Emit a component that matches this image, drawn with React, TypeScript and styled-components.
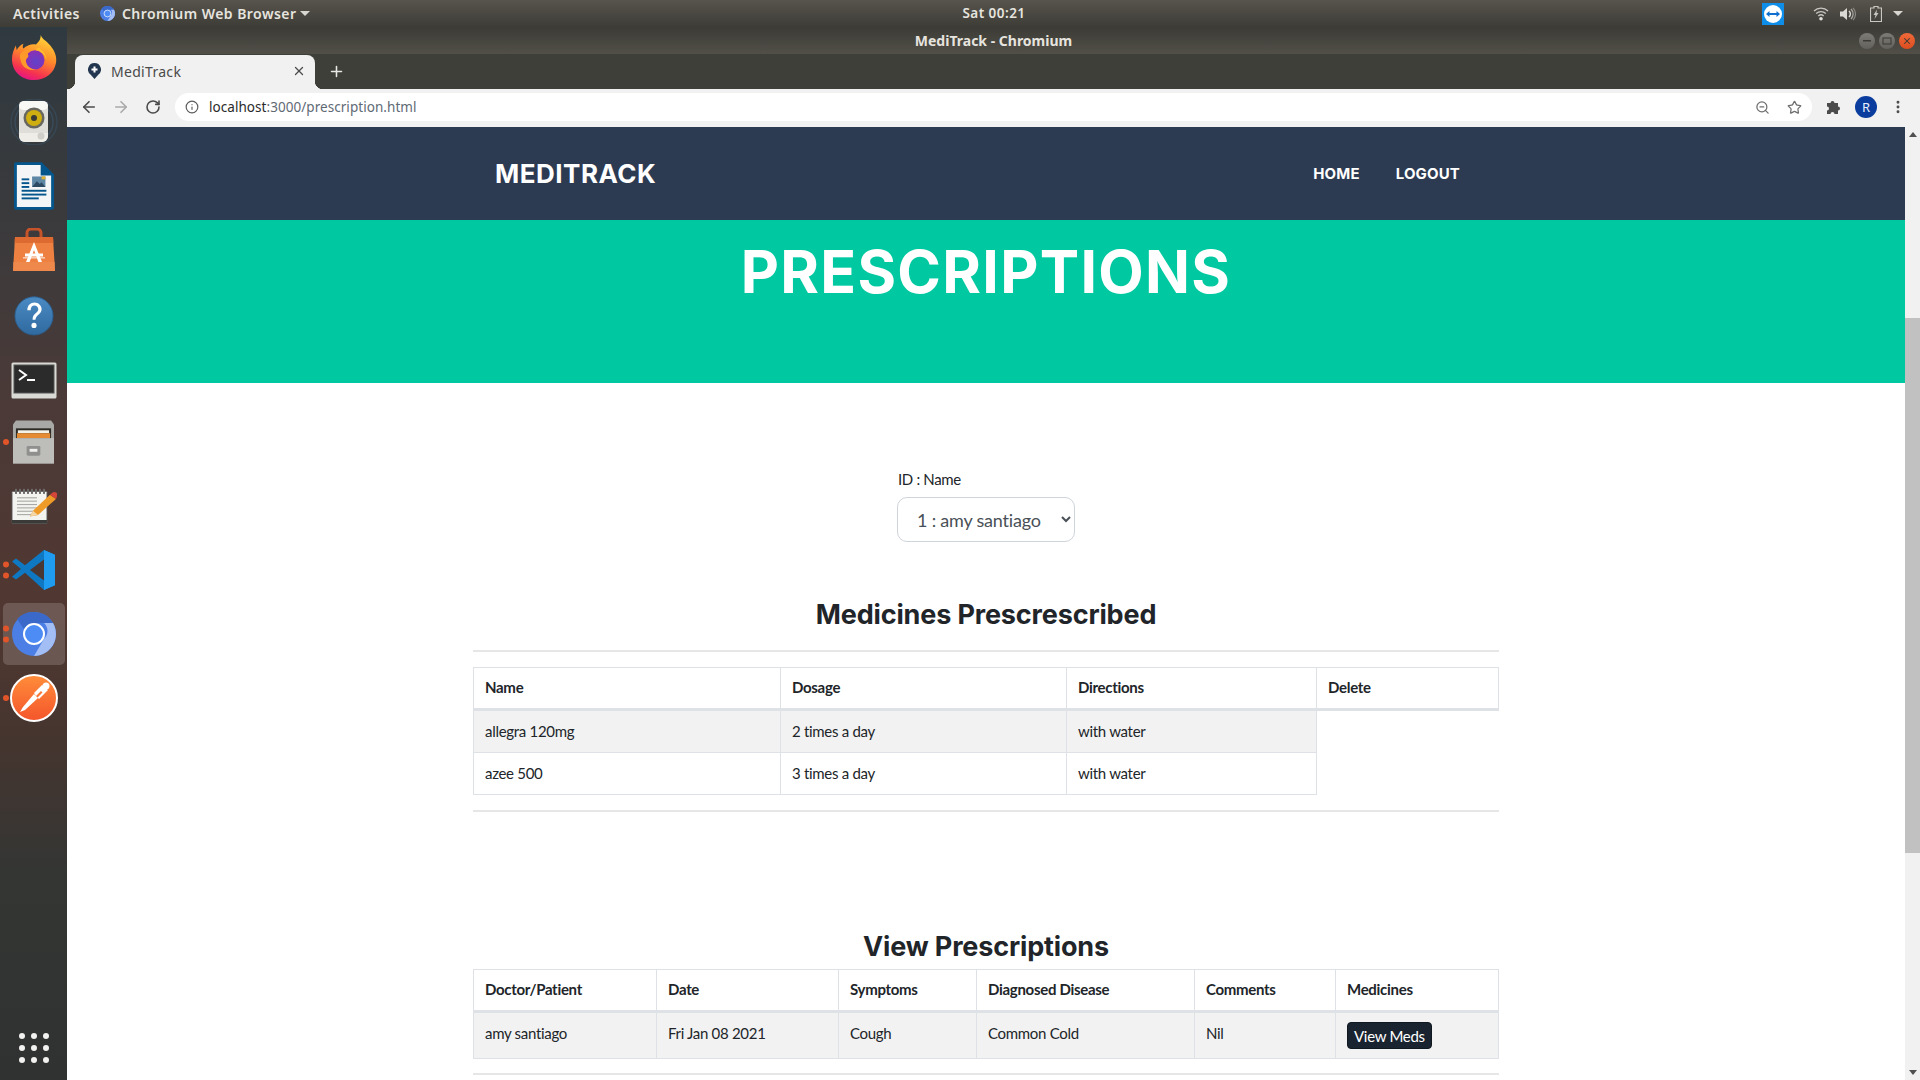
import React from "react";
import styled, { createGlobalStyle } from "styled-components";
import { ArrowLeft, ArrowRight, RotateCw, Info, ZoomOut, Star, X, Plus, MoreVertical } from "lucide-react";

const Global = createGlobalStyle`
  html, body { margin: 0; padding: 0; overflow: hidden; background: #fff; }
  * { box-sizing: border-box; }
`;

const Shell = styled.div`
  width: 1920px; height: 1080px; overflow: hidden; display: flex; flex-direction: column;
  font-family: "Lato", "Liberation Sans", sans-serif;
`;
const TopBar = styled.header`
  height: 27px; flex: none; display: grid; grid-template-columns: 962px 64px 1fr; align-items: center;
  background: linear-gradient(#57544d, #3d3c36);
  color: #e6e4df; font: 600 14px "Noto Sans", sans-serif; letter-spacing: .45px;
`;
const TopLeft = styled.div`display: flex; align-items: center; padding-left: 13px; gap: 20px;`;
const AppMenu = styled.div`display: flex; align-items: center; gap: 7px;`;
const Caret = styled.span`
  width: 0; height: 0; border-left: 5px solid transparent; border-right: 5px solid transparent; border-top: 5px solid #d8d6d0;
`;
const MenuCaret = styled(Caret)`margin-left: -4px;`;
const Clock = styled.div`text-align: center; white-space: nowrap; font-size: 13.5px; padding-bottom: 1px;`;
const Tray = styled.div`display: flex; align-items: center; justify-content: flex-end; padding-right: 14px; color: #d5d3ce;`;
const TrayItem = styled.span<{ $w: number; $gap?: number }>`
  width: ${p => p.$w}px; margin-left: ${p => p.$gap ?? 0}px; display: flex; justify-content: center; align-items: center;
`;
const Body = styled.div`flex: 1; display: flex; min-height: 0;`;
const Dock = styled.nav`
  width: 67px; flex: none; display: flex; flex-direction: column; align-items: center; overflow: hidden;
  background: linear-gradient(#2f3a40 0, #3a3a3c 18%, #4a3a38 35%, #513731 55%, #45352f 68%, #343634 80%, #2f3230 100%);
`;
const DockItem = styled.div<{ $active?: boolean }>`
  position: relative; width: 62px; height: 62px; margin: 1px 0; flex: none; display: flex; align-items: center; justify-content: center; border-radius: 5px;
  background: ${p => (p.$active ? "rgba(255,255,255,.17)" : "transparent")};
  &:first-child { margin-top: 0; }
`;
const Dots = styled.div`
  position: absolute; left: 0; top: 50%; transform: translateY(-50%); display: flex; flex-direction: column; gap: 5px;
`;
const Dot = styled.i`display: block; width: 6px; height: 6px; border-radius: 50%; background: #e2552a;`;
const DockGrid = styled.div`
  margin-top: auto; margin-bottom: 17px; display: grid; grid-template-columns: repeat(3, 6px); gap: 6px;
`;
const GridDot = styled.i`width: 6px; height: 6px; border-radius: 50%; background: #f2f2f0; display: block;`;

const Win = styled.div`flex: 1; min-width: 0; display: flex; flex-direction: column;`;
const TitleBar = styled.div`
  height: 27px; flex: none; display: grid; grid-template-columns: 1fr auto 1fr; align-items: center; color: #e6e4df;
  background: linear-gradient(#3c3b35, #514f48); font: 700 14px "Noto Sans", sans-serif;
`;
const WinTitle = styled.span`grid-column: 2;`;
const WinBtns = styled.div`grid-column: 3; display: flex; justify-content: flex-end; gap: 4px; padding-right: 5px;`;
const WinBtn = styled.span<{ $close?: boolean }>`
  width: 16px; height: 16px; border-radius: 50%; display: flex; align-items: center; justify-content: center;
  background: ${p => (p.$close ? "linear-gradient(#f0693a,#dd4d1e)" : "linear-gradient(#7c7b75,#62615b)")};
  color: #3b3a35;
`;
const TabStrip = styled.div`
  height: 35px; flex: none; display: flex; align-items: flex-end; padding-left: 8px; background: #3f3f39; gap: 10px;
`;
const Tab = styled.div`
  position: relative; width: 240px; height: 34px; background: #f1f1f1; border-radius: 8px 8px 0 0; display: flex; align-items: center;
  padding: 0 9px 2px 13px; color: #4a4a4a; font: 400 14px "Noto Sans", sans-serif; letter-spacing: .3px;
  &::before, &::after { content: ""; position: absolute; bottom: 0; width: 8px; height: 8px; }
  &::before { left: -8px; background: radial-gradient(circle at 0 0, #3f3f39 8px, #f1f1f1 8.5px); }
  &::after { right: -8px; background: radial-gradient(circle at 100% 0, #3f3f39 8px, #f1f1f1 8.5px); }
`;
const TabTitle = styled.span`flex: 1; margin-left: 10px;`;
const NewTab = styled.span`color: #e8e8e6; display: flex; align-self: center; margin-left: 3px;`;
const Toolbar = styled.div`
  height: 38px; flex: none; background: #f1f1f1; display: flex; align-items: center; padding: 0 6px 2px 0;
`;
const NavBtn = styled.span<{ $w: number; $dim?: boolean }>`
  width: ${p => p.$w}px; flex: none; display: flex; justify-content: center; color: ${p => (p.$dim ? "#a9a9a9" : "#4b4b4b")};
`;
const Lead = styled.span`width: 6px; flex: none;`;
const UrlBar = styled.div`
  flex: 1; height: 28px; background: #fff; border-radius: 14px; display: flex; align-items: center; padding: 0 2px 0 10px; margin: 0 6px 0 6px;
  font: 400 13.5px "Noto Sans", sans-serif; letter-spacing: .05px; color: #5f6a75;
`;
const UrlPath = styled.span`padding-bottom: 1px;`;
const UrlHost = styled(UrlPath)`color: #2a2a2a; margin-left: 10px;`;
const UrlSpacer = styled.span`flex: 1;`;
const UrlIcon = styled.span`width: 32px; display: flex; justify-content: center; color: #6e6e6e;`;
const Avatar = styled.span`
  width: 22px; height: 22px; border-radius: 50%; background: #0b3d9e; color: #e8eefc; font: 400 13px "Noto Sans", sans-serif;
  display: flex; align-items: center; justify-content: center;
`;
const Viewport = styled.div`flex: 1; min-height: 0; display: flex;`;
const Page = styled.main`flex: 1; min-width: 0; overflow: hidden; background: #fff; color: #212529;`;
const Scroll = styled.div`width: 15px; flex: none; background: #f1f1f1; display: flex; flex-direction: column; align-items: center;`;
const ScrollArrow = styled.span<{ $down?: boolean }>`
  flex: none; width: 0; height: 0; margin: 5px 0; border-left: 4px solid transparent; border-right: 4px solid transparent;
  ${p => (p.$down ? "border-top: 5px solid #505050;" : "border-bottom: 5px solid #505050;")}
`;
const Thumb = styled.div`width: 15px; height: 535px; background: #c1c1c1; margin: 176px 0 auto;`;

const SiteNav = styled.div`
  height: 93px; background: #2c3a52; display: flex; align-items: center; justify-content: space-between; padding: 0 445px 0 428px; color: #fff;
`;
const Brand = styled.div`font: 700 26px "Inter", sans-serif; letter-spacing: .5px;`;
const NavLinks = styled.div`display: flex; gap: 36px;`;
const NavLink = styled.a`font: 700 15px "Inter", sans-serif; letter-spacing: .15px; color: #fff;`;
const Hero = styled.section`height: 163px; background: #00c9a1; text-align: center; color: #fff;`;
const HeroTitle = styled.h1`margin: 0; padding-top: 16px; font: 700 59px/72px "Inter", sans-serif; letter-spacing: 1.3px;`;
const Content = styled.div`width: 1026px; margin: 0 auto;`;
const PatientForm = styled.div`display: flex; flex-direction: column; width: 178px; margin: 84px auto 0;`;
const Label = styled.label`font-size: 15px; line-height: 24px; margin-bottom: 6px; letter-spacing: -.35px; padding-left: 1px;`;
const Select = styled.select`
  height: 45px; border: 1px solid #ced4da; border-radius: 10px; background: #fff; color: #495057; padding: 0 0 0 15px;
  font: 400 18px "Lato", sans-serif; letter-spacing: -.2px;
`;
const SectionTitle = styled.h2<{ $top: number }>`
  margin: ${p => p.$top}px 0 0; text-align: center; font: 700 27px/34px "Inter", sans-serif; color: #212529; letter-spacing: -.15px;
`;
const Rule = styled.hr<{ $top: number; $bottom: number }>`
  border: 0; height: 2px; background: #e6e6e6; margin: ${p => p.$top}px 0 ${p => p.$bottom}px;
`;
const Table = styled.table<{ $top?: number }>`
  width: 1025px; margin-top: ${p => p.$top ?? 0}px; border-collapse: collapse; table-layout: fixed; font-size: 15px; line-height: 24px;
`;
const Cell = styled.td`border: 1px solid #dee2e6; padding: 8px 11px 9px; letter-spacing: -.3px; vertical-align: top;`;
const Head = styled.th`border: 1px solid #dee2e6; border-bottom: 3px solid #dee2e6; padding: 7px 11px 9px; text-align: left; font-weight: 700; letter-spacing: -.3px;`;
const Row = styled.tr<{ $shade?: boolean }>`background: ${p => (p.$shade ? "#f2f2f2" : "#fff")};`;
const ViewBtn = styled.button`
  background: #1a2430; color: #fff; border: 1px solid #101820; border-radius: 4px; font: 400 15px "Lato", sans-serif; height: 27px; padding: 0 6px; display: block; margin-top: 1px; letter-spacing: -.3px;
`;

const Firefox = () => (
  <svg width="46" height="46" viewBox="0 0 48 48">
    <defs>
      <linearGradient id="ff1" x1="0.7" y1="0" x2="0.3" y2="1"><stop offset="0" stopColor="#ffd83a" /><stop offset=".45" stopColor="#ff8a2a" /><stop offset=".8" stopColor="#f5334f" /><stop offset="1" stopColor="#e3128a" /></linearGradient>
      <radialGradient id="ff2" cx=".55" cy=".6" r=".6"><stop offset="0" stopColor="#5f41c9" /><stop offset="1" stopColor="#8c2fb3" /></radialGradient>
    </defs>
    <path d="M31 0c2 5 6 6 10 11 5 6 7 12 6 18-2 11-11 18-23 18C11 47 1 38 1 25c0-5 2-10 4-14l1 5c1-3 4-6 7-7-1 2-1 4 0 5 3-3 9-5 13-4 3-3 5-5 5-10z" fill="url(#ff1)" />
    <circle cx="25" cy="26" r="10" fill="url(#ff2)" />
    <path d="M10 19c3-3 8-5 13-3-5 1-6 3-5 5 1 3-4 3-2 8 1 4 5 7 10 7-8 2-15-3-16-10-1-3-1-5 0-7z" fill="#ff9a2a" />
    <path d="M28 13c5 2 9 7 9 13-2-6-5-9-11-10z" fill="#ffbd2e" />
  </svg>
);
const Speaker = () => (
  <svg width="50" height="46" viewBox="0 0 50 46">
    <circle cx="25" cy="23" r="23" fill="none" stroke="#3c5a72" strokeOpacity=".4" strokeWidth="1.500" />
    <circle cx="25" cy="23" r="19" fill="none" stroke="#3c5a72" strokeOpacity=".55" strokeWidth="1.500" />
    <rect x="10" y="2" width="29" height="41" rx="6" fill="#dfded8" />
    <rect x="10" y="2" width="29" height="9" rx="5" fill="#f8f8f5" />
    <path d="M10 34h29v3a6 6 0 0 1-6 6H16a6 6 0 0 1-6-6z" fill="#eeede8" />
    <circle cx="25" cy="19" r="10.500" fill="#67665f" />
    <circle cx="25" cy="19" r="8" fill="#cfae12" />
    <circle cx="25" cy="19" r="3" fill="#3a3a36" />
    <circle cx="32" cy="37" r="3.500" fill="#cfcec8" />
  </svg>
);
const Writer = () => (
  <svg width="40" height="48" viewBox="0 0 42 50">
    <path d="M2 0h27l13 13v34a3 3 0 0 1-3 3H3a3 3 0 0 1-3-3V2a2 2 0 0 1 2-2z" fill="#04568c" />
    <path d="M3 3h25v11h11v33H3z" fill="#f4f5f6" />
    <path d="M29 2l11 11H29z" fill="#04568c" />
    <rect x="8" y="17" width="8" height="2" fill="#04568c" /><rect x="8" y="21" width="8" height="2" fill="#04568c" /><rect x="8" y="25" width="8" height="2" fill="#04568c" />
    <rect x="19" y="15" width="14" height="11" fill="#5e86a5" />
    <path d="M19 26l5-6 3 3 2-2 4 5z" fill="#2c4a63" /><rect x="29" y="15" width="4" height="3" fill="#e0b32f" />
    <rect x="8" y="29" width="26" height="2" fill="#04568c" /><rect x="8" y="33" width="26" height="2" fill="#04568c" /><rect x="8" y="37" width="18" height="2" fill="#04568c" />
  </svg>
);
const Store = () => (
  <svg width="42" height="44" viewBox="0 0 42 44">
    <path d="M14 10V5a4 4 0 0 1 4-4h6a4 4 0 0 1 4 4v5" fill="none" stroke="#c6532a" strokeWidth="3" />
    <path d="M2 9h38l2 34H0z" fill="#ee8142" />
    <path d="M2 9h38l.3 6H1.700z" fill="#dd6a30" />
    <path d="M0 34h42v9H0z" fill="#f08d52" opacity=".6" />
    <path d="M21 14l-8 20h3.600l4.400-12 4.400 12H29z" fill="#fff" />
    <rect x="12" y="25.500" width="18" height="3" fill="#fff" /><rect x="10" y="29" width="22" height="1.600" fill="#fff" opacity=".6" />
  </svg>
);
const Help = () => (
  <svg width="40" height="44" viewBox="0 -4 42 46">
    <defs><linearGradient id="hp" x1="0" y1="0" x2="0" y2="1"><stop offset="0" stopColor="#4b8ac4" /><stop offset="1" stopColor="#2f6a9f" /></linearGradient></defs>
    <circle cx="21" cy="21" r="20" fill="url(#hp)" stroke="#2a5f8f" />
    <path d="M14 15c0-5 3.500-8 7.500-8s7.500 3 7.500 7c0 5-6 6-6.500 11h-3c0-7 6-7 6-11 0-2.500-2-4-4-4-2.500 0-4 2-4 5z" fill="#fff" />
    <circle cx="21" cy="31" r="2.700" fill="#fff" />
  </svg>
);
const Terminal = () => (
  <svg width="46" height="42" viewBox="0 0 46 42">
    <rect x=".5" y="5.500" width="45" height="36" rx="1.500" fill="#d9d9d6" />
    <rect x="3" y="8" width="40" height="28" fill="#2b2b2b" stroke="#555" />
    <path d="M8 13l7 5-7 5" fill="none" stroke="#fff" strokeWidth="2" />
    <rect x="16" y="22" width="8" height="2" fill="#fff" />
  </svg>
);
const Files = () => (
  <svg width="41" height="44" viewBox="0 0 42 44">
    <path d="M3 0h36l3 4v40H0V4z" fill="#a8a8a6" />
    <rect x="3" y="8" width="36" height="14" fill="#2d2a26" />
    <rect x="5" y="10" width="32" height="3" fill="#f4f1e6" /><rect x="4" y="13" width="34" height="5" fill="#e58c32" />
    <rect x="0" y="18" width="42" height="26" fill="#bdbdba" />
    <rect x="14" y="26" width="14" height="10" rx="1.500" fill="#8f8f8d" /><rect x="17" y="29" width="8" height="3" fill="#efefed" />
  </svg>
);
const Notes = () => (
  <svg width="46" height="37" viewBox="0 0 46 44" preserveAspectRatio="none">
    <rect x="1" y="4" width="35" height="38" rx="1" fill="#f3f3ef" stroke="#555" />
    <path d="M1 38h35v4H1z" fill="#3a3a38" />
    {[4, 8, 12, 16, 20, 24, 28, 32].map(x => <rect key={x} x={x} y="1" width="2" height="6" fill="#6a6a68" />)}
    {[11, 15, 19, 23, 27, 31].map(y => <rect key={y} x="6" y={y} width="20" height="1.300" fill="#a8a8a6" />)}
    <path d="M19 34l3-7L39 8l6 5-18 19z" fill="#ee9b28" />
    <path d="M19 34l3-7 5 5z" fill="#f4d7a6" />
    <path d="M39 8l2-2a3 3 0 0 1 5 4l-1 3z" fill="#d4453a" />
  </svg>
);
const VSCode = () => (
  <svg width="44" height="42" viewBox="0 0 44 44" preserveAspectRatio="none">
    <path d="M32 1l11 5v32l-11 5-19-18L4 32 0 29l9-8-9-8 4-3 9 7z" fill="#0e78c2" />
    <path d="M32 1l11 5v32l-11 5z" fill="#1f9cf0" />
    <path d="M32 11L18 22l14 11z" fill="#4a3733" />
  </svg>
);
const Chromium = ({ s }: { s: number }) => (
  <svg width={s} height={s} viewBox="0 0 44 44">
    <circle cx="22" cy="22" r="22" fill="#4b7fe6" />
    <path d="M22 0a22 22 0 0 1 19 11H22a11 11 0 0 0-10 6L5 7A22 22 0 0 1 22 0z" fill="#3a69c9" />
    <path d="M41 11a22 22 0 0 1-19 33l10-17a11 11 0 0 0 0-16z" fill="#a3bdf5" />
    <circle cx="22" cy="22" r="10" fill="#4d8cf5" stroke="#fff" strokeWidth="2" />
  </svg>
);
const Postman = () => (
  <svg width="48" height="48" viewBox="0 0 48 48">
    <defs><linearGradient id="pm" x1="0" y1="0" x2="0" y2="1"><stop offset="0" stopColor="#ff8d3a" /><stop offset="1" stopColor="#f4552b" /></linearGradient></defs>
    <circle cx="24" cy="24" r="23" fill="url(#pm)" stroke="#fff" strokeWidth="2" />
    <path d="M10 38l3-5 11-13 4 4-13 12z" fill="#fff" />
    <path d="M24 19l8-8 6 5-9 9-1.500-1.500 5-5-1.500-1.500-5 5z" fill="#fff" />
    <circle cx="36" cy="12" r="3.500" fill="#fff" />
  </svg>
);
const Puzzle = () => (
  <svg width="16" height="16" viewBox="0 0 16 16">
    <path d="M1 4h3.500a2 2 0 1 1 4 0H12v3.500a2 2 0 1 1 0 4V15H8.500a2 2 0 1 0-4 0H1v-3.500a2 2 0 1 0 0-4z" fill="#4b4b4b" />
  </svg>
);
const Pin = () => (
  <svg width="13" height="16" viewBox="0 0 13 16">
    <path d="M6.500 0a6.500 6.500 0 0 1 4 11.600L6.500 16l-4-4.400A6.500 6.500 0 0 1 6.500 0z" fill="#22374f" />
    <path d="M5.500 3.500h2v2h2v2h-2v2h-2v-2h-2v-2h2z" fill="#fff" />
  </svg>
);
const TeamViewer = () => (
  <svg width="22" height="22" viewBox="0 0 22 22">
    <rect width="22" height="22" fill="#0e8ee9" />
    <circle cx="11" cy="11" r="9" fill="#fff" />
    <path d="M4 11l3.500-3v2h7V8l3.500 3-3.500 3v-2h-7v2z" fill="#0e6fcf" />
  </svg>
);
const WifiIcon = () => (
  <svg width="16" height="15" viewBox="0 0 16 15">
    <g fill="none" stroke="#c9c7c2" strokeWidth="1.300">
      <path d="M1 5a10 10 0 0 1 14 0" /><path d="M3.200 7.500a7 7 0 0 1 9.600 0" /><path d="M5.300 10a4 4 0 0 1 5.400 0" />
    </g>
    <circle cx="8" cy="12.800" r="1.800" fill="#e2e0da" />
  </svg>
);
const SoundIcon = () => (
  <svg width="16" height="14" viewBox="0 0 16 14">
    <path d="M0 4.500h3L7 1v12L3 9.500H0z" fill="#dcdad5" />
    <path d="M9 4a4 4 0 0 1 0 6" fill="none" stroke="#dcdad5" strokeWidth="1.500" />
    <path d="M11 2a7 7 0 0 1 0 10" fill="none" stroke="#a9a7a2" strokeWidth="1.300" />
    <path d="M13 .8a9 9 0 0 1 0 12.400" fill="none" stroke="#8a8883" strokeWidth="1.200" />
  </svg>
);
const Battery = () => (
  <svg width="12" height="16" viewBox="0 0 12 16">
    <path d="M4 .5h4v1.500h3.500V15.500H.5V2H4z" fill="none" stroke="#c9c7c2" strokeWidth="1.200" />
    <path d="M7 3.500L3.500 9h2L4.500 13 8.500 7h-2z" fill="#c9c7c2" />
  </svg>
);

const dockItems: { el: React.ReactNode; dots?: number; active?: boolean }[] = [
  { el: <Firefox /> }, { el: <Speaker /> }, { el: <Writer /> }, { el: <Store /> }, { el: <Help /> }, { el: <Terminal /> },
  { el: <Files />, dots: 1 }, { el: <Notes /> }, { el: <VSCode />, dots: 2 }, { el: <Chromium s={44} />, dots: 2, active: true }, { el: <Postman />, dots: 1 },
];

export default function App() {
  return (
    <Shell>
      <Global />
      <TopBar>
        <TopLeft>
          <span>Activities</span>
          <AppMenu><Chromium s={15} />Chromium Web Browser<MenuCaret /></AppMenu>
        </TopLeft>
        <Clock>Sat 00:21</Clock>
        <Tray>
          <TrayItem $w={22}><TeamViewer /></TrayItem>
          <TrayItem $w={26} $gap={24}><WifiIcon /></TrayItem>
          <TrayItem $w={28}><SoundIcon /></TrayItem>
          <TrayItem $w={28}><Battery /></TrayItem>
          <TrayItem $w={16}><Caret /></TrayItem>
        </Tray>
      </TopBar>
      <Body>
        <Dock>
          {dockItems.map((d, i) => (
            <DockItem key={i} $active={d.active}>
              {d.el}
              {d.dots ? <Dots>{Array.from({ length: d.dots }).map((_, k) => <Dot key={k} />)}</Dots> : null}
            </DockItem>
          ))}
          <DockGrid>{Array.from({ length: 9 }).map((_, i) => <GridDot key={i} />)}</DockGrid>
        </Dock>
        <Win>
          <TitleBar>
            <WinTitle>MediTrack - Chromium</WinTitle>
            <WinBtns>
              <WinBtn><svg width="10" height="10"><rect x="1" y="4" width="8" height="1.500" fill="#3b3a35" /></svg></WinBtn>
              <WinBtn><svg width="10" height="10"><rect x="1" y="2" width="8" height="6" fill="none" stroke="#3b3a35" /></svg></WinBtn>
              <WinBtn $close><X size={10} strokeWidth={2.5} /></WinBtn>
            </WinBtns>
          </TitleBar>
          <TabStrip>
            <Tab><Pin /><TabTitle>MediTrack</TabTitle><X size={14} strokeWidth={2.2} /></Tab>
            <NewTab><Plus size={17} strokeWidth={2.2} /></NewTab>
          </TabStrip>
          <Toolbar>
            <Lead />
            <NavBtn $w={32}><ArrowLeft size={18} strokeWidth={2.2} /></NavBtn>
            <NavBtn $w={32} $dim><ArrowRight size={18} strokeWidth={2.2} /></NavBtn>
            <NavBtn $w={32}><RotateCw size={16} strokeWidth={2.4} /></NavBtn>
            <UrlBar>
              <Info size={14} color="#5a5a5a" />
              <UrlHost>localhost</UrlHost><UrlPath>:3000/prescription.html</UrlPath>
              <UrlSpacer />
              <UrlIcon><ZoomOut size={15} /></UrlIcon>
              <UrlIcon><Star size={15} /></UrlIcon>
            </UrlBar>
            <NavBtn $w={32}><Puzzle /></NavBtn>
            <NavBtn $w={32}><Avatar>R</Avatar></NavBtn>
            <NavBtn $w={32}><MoreVertical size={16} strokeWidth={2.4} /></NavBtn>
          </Toolbar>
          <Viewport>
            <Page>
              <SiteNav>
                <Brand>MEDITRACK</Brand>
                <NavLinks><NavLink>HOME</NavLink><NavLink>LOGOUT</NavLink></NavLinks>
              </SiteNav>
              <Hero><HeroTitle>PRESCRIPTIONS</HeroTitle></Hero>
              <Content>
                <PatientForm>
                  <Label>ID : Name</Label>
                  <Select defaultValue="1"><option value="1">1 : amy santiago</option></Select>
                </PatientForm>
                <SectionTitle $top={56}>Medicines Prescrescribed</SectionTitle>
                <Rule $top={18} $bottom={15} />
                <Table>
                  <colgroup><col width="307" /><col width="286" /><col width="250" /><col width="182" /></colgroup>
                  <thead><tr><Head>Name</Head><Head>Dosage</Head><Head>Directions</Head><Head>Delete</Head></tr></thead>
                  <tbody>
                    <Row $shade><Cell>allegra 120mg</Cell><Cell>2 times a day</Cell><Cell>with water</Cell></Row>
                    <Row><Cell>azee 500</Cell><Cell>3 times a day</Cell><Cell>with water</Cell></Row>
                  </tbody>
                </Table>
                <Rule $top={15} $bottom={0} />
                <SectionTitle $top={118}>View Prescriptions</SectionTitle>
                <Table $top={5}>
                  <colgroup><col width="183" /><col width="182" /><col width="138" /><col width="218" /><col width="141" /><col width="163" /></colgroup>
                  <thead><tr><Head>Doctor/Patient</Head><Head>Date</Head><Head>Symptoms</Head><Head>Diagnosed Disease</Head><Head>Comments</Head><Head>Medicines</Head></tr></thead>
                  <tbody>
                    <Row $shade><Cell>amy santiago</Cell><Cell>Fri Jan 08 2021</Cell><Cell>Cough</Cell><Cell>Common Cold</Cell><Cell>Nil</Cell><Cell><ViewBtn>View Meds</ViewBtn></Cell></Row>
                  </tbody>
                </Table>
                <Rule $top={14} $bottom={0} />
              </Content>
            </Page>
            <Scroll>
              <ScrollArrow />
              <Thumb />
              <ScrollArrow $down />
            </Scroll>
          </Viewport>
        </Win>
      </Body>
    </Shell>
  );
}
